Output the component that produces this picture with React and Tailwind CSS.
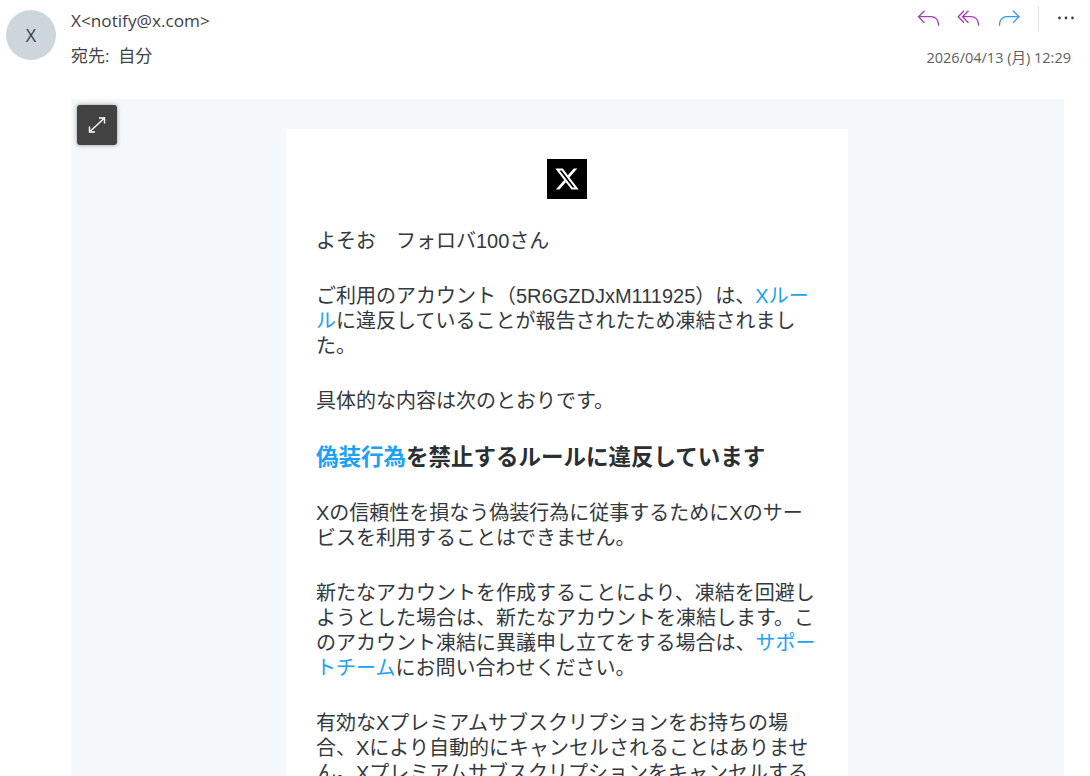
import { useState } from 'react';

const uiFont = "font-['Open_Sans','Noto_Sans_CJK_JP',sans-serif]";

function ReplyIcon() {
  return (
    <svg width="24" height="24" viewBox="0 0 24 24" fill="none" stroke="#a43fb5" strokeWidth="1.3">
      <path d="M7.5 4.7 1.5 10.7l6 6" />
      <path d="M2 10.7h12c4.5 0 7.5 3.3 7.5 7.5v1.5" />
    </svg>
  );
}

function ReplyAllIcon() {
  return (
    <svg width="24" height="24" viewBox="0 0 24 24" fill="none" stroke="#a43fb5" strokeWidth="1.3">
      <path d="M7 4.7 1.2 10.7l5.8 6" />
      <path d="M11.5 4.7 5.5 10.7l6 6" />
      <path d="M6 10.7h8c4.5 0 7.5 3.3 7.5 7.5v1.5" />
    </svg>
  );
}

function ForwardIcon() {
  return (
    <svg width="24" height="24" viewBox="0 0 24 24" fill="none" stroke="#2a9df4" strokeWidth="1.3">
      <path d="m16 4.7 6 6-6 6" />
      <path d="M21.5 10.7H10c-4.5 0-7.5 3.3-7.5 7.5v1.5" />
    </svg>
  );
}

function XLogo() {
  return (
    <svg width="26" height="26" viewBox="0 0 24 24" fill="#fff">
      <path d="M18.244 2.25h3.308l-7.227 8.26 8.502 11.24H16.17l-5.214-6.817L4.99 21.75H1.68l7.73-8.835L1.254 2.25H8.08l4.713 6.231zm-1.161 17.52h1.833L7.084 4.126H5.117z" />
    </svg>
  );
}

function Link({ children }) {
  return <a className="text-[#1da1f2]">{children}</a>;
}

export default function App() {
  const [expanded, setExpanded] = useState(false);

  return (
    <div className={`h-[776px] overflow-hidden bg-white ${uiFont}`}>
      <div className="flex h-[99px]">
        <div className="ml-1.5 mt-2.5 flex h-[50px] w-[50px] shrink-0 items-center justify-center rounded-full bg-[#cdd6da] text-lg text-[#3b4246]">
          X
        </div>
        <div className="ml-[15px] flex-1 text-[#424242]">
          <div className="mt-[9px] text-[17.2px] leading-[24px]">X&lt;notify@x.com&gt;</div>
          <div className="mt-[11px] text-[17px] leading-[24px]">宛先:&nbsp; 自分</div>
        </div>
        <div className="mr-[19px] flex flex-col items-end">
          <div className="-mr-[3px] mt-1.5 flex h-6 items-center">
            <div className="flex items-center gap-4">
              <ReplyIcon />
              <ReplyAllIcon />
              <ForwardIcon />
            </div>
            <div className="ml-[17px] h-[25px] w-px bg-[#e1e1e1]" />
            <svg className="ml-[19px]" width="16" height="4" viewBox="0 0 16 4" fill="#424242">
              <circle cx="1.5" cy="2" r="1.4" />
              <circle cx="8" cy="2" r="1.4" />
              <circle cx="14.5" cy="2" r="1.4" />
            </svg>
          </div>
          <div className="mt-[18px] text-[14.5px] leading-5 text-[#616161]">2026/04/13 (月) 12:29</div>
        </div>
      </div>

      <div className="relative ml-[71px] w-[993px] bg-[#f5f8fa] pr-px pt-[30px]">
        <button
          onClick={() => setExpanded(!expanded)}
          className="absolute left-1.5 top-1.5 flex h-10 w-10 items-center justify-center rounded-[3px] bg-[#424242] shadow-[0_0_4px_rgba(0,0,0,0.4)]"
        >
          <svg width="20" height="20" viewBox="0 0 20 20" fill="none" stroke="#fff" strokeWidth="1.4">
            <path d="M12 3h5.5v5.5" />
            <path d="M8 17H2.5v-5.5" />
            <path d="M17.5 3 2.5 17" />
          </svg>
        </button>

        <div className="mx-auto w-[562px] bg-white px-[30px] pt-[30px] font-['Liberation_Sans','Noto_Sans_CJK_JP',sans-serif] text-[20px] leading-[25px] text-[#33393d]">
          <div className="mx-auto flex h-10 w-10 items-center justify-center bg-black">
            <XLogo />
          </div>
          <p className="mt-[30px]">よそお　フォロバ100さん</p>
          <p className="mt-[30px]">
            ご利用のアカウント（5R6GZDJxM111925）は、<Link>Xルール</Link>に違反していることが報告されたため凍結されました。
          </p>
          <p className="mt-[30px]">具体的な内容は次のとおりです。</p>
          <h2 className="mt-[30px] text-[22.5px] font-bold leading-[27px] text-[#292f33]">
            <Link>偽装行為</Link>を禁止するルールに違反しています
          </h2>
          <p className="mt-[30px]">Xの信頼性を損なう偽装行為に従事するためにXのサービスを利用することはできません。</p>
          <p className="mt-[30px]">
            新たなアカウントを作成することにより、凍結を回避しようとした場合は、新たなアカウントを凍結します。このアカウント凍結に異議申し立てをする場合は、<Link>サポートチーム</Link>にお問い合わせください。
          </p>
          <p className="mt-[30px]">
            有効なXプレミアムサブスクリプションをお持ちの場合、Xにより自動的にキャンセルされることはありません。Xプレミアムサブスクリプションをキャンセルする場合は、お手続きください。
          </p>
        </div>
      </div>
    </div>
  );
}
